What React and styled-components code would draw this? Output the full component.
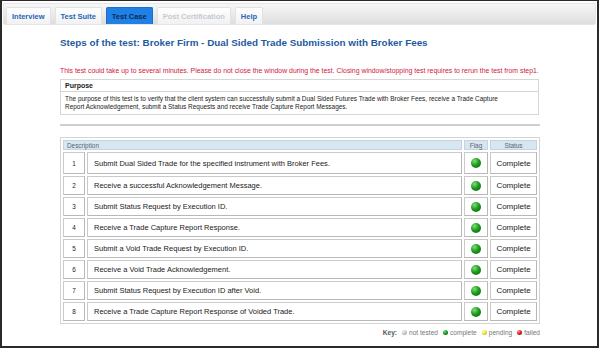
import React from "react";
import styled, { createGlobalStyle } from "styled-components";

const GlobalStyle = createGlobalStyle`
  html, body {
    margin: 0;
    padding: 0;
    background: #fff;
  }
  body {
    font-family: "Liberation Sans", Arial, sans-serif;
  }
`;

const tabs = [
  { label: "Interview" },
  { label: "Test Suite" },
  { label: "Test Case", active: true },
  { label: "Post Certification", disabled: true },
  { label: "Help" },
];

const steps = [
  "Submit Dual Sided Trade for the specified instrument with Broker Fees.",
  "Receive a successful Acknowledgement Message.",
  "Submit Status Request by Execution ID.",
  "Receive a Trade Capture Report Response.",
  "Submit a Void Trade Request by Execution ID.",
  "Receive a Void Trade Acknowledgement.",
  "Submit Status Request by Execution ID after Void.",
  "Receive a Trade Capture Report Response of Voided Trade.",
];

const ballColors = {
  green: ["#7ee07a", "#1f9a1f", "#0b5e0b"],
  grey: ["#f4f4f4", "#c8c8c8", "#9a9a9a"],
  yellow: ["#fffbb0", "#eee23a", "#b8a800"],
  red: ["#ff9a9a", "#e02020", "#900808"],
};

const App = () => {
  return (
    <>
      <GlobalStyle />
      <Frame>
        <TabBar>
          {tabs.map((t) => (
            <Tab key={t.label} $active={t.active} $disabled={t.disabled}>
              {t.label}
            </Tab>
          ))}
        </TabBar>
        <Content>
          <Title>
            Steps of the test: Broker Firm - Dual Sided Trade Submission with
            Broker Fees
          </Title>
          <Warning>
            This test could take up to several minutes. Please do not close the
            window during the test. Closing window/stopping test requires to
            rerun the test from step1.
          </Warning>
          <PurposeBox>
            <PurposeHead>Purpose</PurposeHead>
            <PurposeText>
              The purpose of this test is to verify that the client system can
              successfully submit a Dual Sided Futures Trade with Broker Fees,
              receive a Trade Capture Report Acknowledgement, submit a Status
              Requests and receive Trade Capture Report Messages.
            </PurposeText>
          </PurposeBox>
          <Divider />
          <StepsTable>
            <thead>
              <tr>
                <HeadCell colSpan={2}>Description</HeadCell>
                <HeadCell $center>Flag</HeadCell>
                <HeadCell $center>Status</HeadCell>
              </tr>
            </thead>
            <tbody>
              {steps.map((s, i) => (
                <Row key={i} $first={i === 0}>
                  <NumCell>{i + 1}</NumCell>
                  <DescCell>{s}</DescCell>
                  <FlagCell>
                    <Ball $size={10} $color="green" />
                  </FlagCell>
                  <StatusCell>Complete</StatusCell>
                </Row>
              ))}
            </tbody>
          </StepsTable>
          <Key>
            <KeyLabel>Key:</KeyLabel>
            <KeyItem>
              <Ball $size={5} $color="grey" /> not tested
            </KeyItem>
            <KeyItem>
              <Ball $size={5} $color="green" /> complete
            </KeyItem>
            <KeyItem>
              <Ball $size={5} $color="yellow" /> pending
            </KeyItem>
            <KeyItem>
              <Ball $size={5} $color="red" /> failed
            </KeyItem>
          </Key>
        </Content>
      </Frame>
    </>
  );
};

const Frame = styled.div`
  box-sizing: border-box;
  width: 599px;
  height: 348px;
  border: 2px solid #2a2a2a;
  border-top-width: 1px;
  padding: 2px 1px 0 1px;
  background: #fff;
  overflow: hidden;
`;

const TabBar = styled.div`
  display: flex;
  align-items: flex-end;
  gap: 4px;
  height: 20px;
  padding: 0 2px;
  background: linear-gradient(#f7f7f7, #dedede);
  border: 1px solid #e6e6e6;
  border-radius: 2px;
`;

const Tab = styled.div`
  height: 17px;
  display: flex;
  align-items: center;
  padding: 0 5px;
  font-size: 7.5px;
  font-weight: bold;
  border: 1px solid ${(p) => (p.$active ? "#1c6fc8" : "#e2e2e2")};
  border-bottom: none;
  border-radius: 2px 2px 0 0;
  box-sizing: border-box;
  background: ${(p) =>
    p.$active ? "#1f80e6" : "linear-gradient(#ffffff, #f1f1f1)"};
  color: ${(p) =>
    p.$active ? "#0d2a55" : p.$disabled ? "#c3cad3" : "#2565b5"};
`;

const Content = styled.div`
  padding: 12px 0 0 57px;
  width: 480px;
`;

const Title = styled.div`
  font-size: 9.85px;
  font-weight: bold;
  color: #1e5b9e;
  margin-bottom: 19px;
`;

const Warning = styled.div`
  font-size: 6.9px;
  color: #d0203a;
  white-space: nowrap;
  margin-bottom: 5px;
`;

const PurposeBox = styled.div`
  border: 1px solid #d6d6d6;
  margin-right: 1px;
`;

const PurposeHead = styled.div`
  font-size: 7px;
  font-weight: bold;
  color: #222;
  padding: 2px 4px 0;
  height: 9px;
  border-bottom: 1px solid #d6d6d6;
`;

const PurposeText = styled.div`
  font-size: 6.45px;
  line-height: 8px;
  color: #222;
  padding: 3px 40px 3px 4px;
`;

const Divider = styled.div`
  height: 2px;
  background: #cfcfcf;
  margin: 9px 0 11px;
`;

const StepsTable = styled.table`
  width: 480px;
  border-collapse: separate;
  border-spacing: 2px;
  border: 1px solid #d4d4d4;
  margin-left: 0;
  font-size: 7.5px;
  color: #222;
`;

const HeadCell = styled.th`
  background: #d7e7f1;
  color: #5a6470;
  font-weight: normal;
  font-size: 6.4px;
  height: 8px;
  padding: 0 3px;
  text-align: ${(p) => (p.$center ? "center" : "left")};
  border: 1px solid #c4d4de;
`;

const Row = styled.tr`
  td {
    height: ${(p) => (p.$first ? "20px" : "17px")};
    border: 1px solid #cacaca;
    border-right-color: #b8b8b8;
    border-bottom-color: #b8b8b8;
    padding: 0;
  }
`;

const NumCell = styled.td`
  width: 20px;
  text-align: center;
  font-size: 6.4px;
`;

const DescCell = styled.td`
  && {
    padding-left: 6px;
  }
`;

const FlagCell = styled.td`
  width: 22px;
  text-align: center;
  vertical-align: middle;
`;

const StatusCell = styled.td`
  width: 45px;
  text-align: center;
  font-size: 8px;
`;

const Ball = styled.span`
  display: inline-block;
  vertical-align: middle;
  width: ${(p) => p.$size}px;
  height: ${(p) => p.$size}px;
  border-radius: 50%;
  background: ${(p) => {
    const [a, b, c] = ballColors[p.$color];
    return `radial-gradient(circle at 35% 30%, ${a} 0%, ${b} 45%, ${c} 100%)`;
  }};
`;

const Key = styled.div`
  display: flex;
  justify-content: flex-end;
  align-items: center;
  gap: 5px;
  margin-top: 5px;
  font-size: 6.6px;
  color: #777;
`;

const KeyLabel = styled.span`
  font-weight: bold;
  color: #555;
`;

const KeyItem = styled.span`
  display: inline-flex;
  align-items: center;
  gap: 2px;
`;

export default App;
